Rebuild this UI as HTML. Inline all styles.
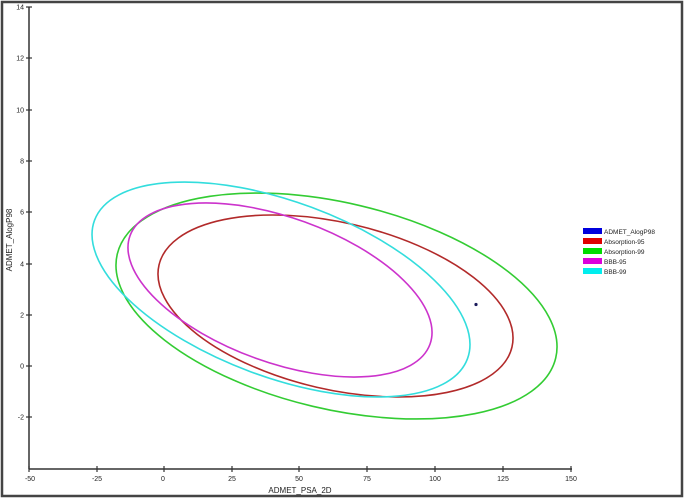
<!DOCTYPE html>
<html><head><style>
html,body{margin:0;padding:0;background:#fff;}
svg{display:block;}
text{font-family:"Liberation Sans",sans-serif;fill:#222;}
</style></head><body>
<svg width="685" height="500" viewBox="0 0 685 500">
<rect x="2" y="2" width="680" height="494" fill="#fff" stroke="#444" stroke-width="2.5"/>
<!-- axes -->
<line x1="29" y1="7" x2="29" y2="469" stroke="#333" stroke-width="1.5"/>
<line x1="29" y1="469" x2="572" y2="469" stroke="#333" stroke-width="1.5"/>
<g stroke="#333" stroke-width="1.2">
<line x1="26" y1="7" x2="32" y2="7"/><line x1="26" y1="58" x2="32" y2="58"/>
<line x1="26" y1="110" x2="32" y2="110"/><line x1="26" y1="161" x2="32" y2="161"/>
<line x1="26" y1="212" x2="32" y2="212"/><line x1="26" y1="264" x2="32" y2="264"/>
<line x1="26" y1="315" x2="32" y2="315"/><line x1="26" y1="366" x2="32" y2="366"/>
<line x1="26" y1="417" x2="32" y2="417"/>
<line x1="29" y1="466" x2="29" y2="472"/><line x1="97" y1="466" x2="97" y2="472"/>
<line x1="164" y1="466" x2="164" y2="472"/><line x1="232" y1="466" x2="232" y2="472"/>
<line x1="299" y1="466" x2="299" y2="472"/><line x1="367" y1="466" x2="367" y2="472"/>
<line x1="435" y1="466" x2="435" y2="472"/><line x1="503" y1="466" x2="503" y2="472"/>
<line x1="571" y1="466" x2="571" y2="472"/>
</g>
<g font-size="7" text-anchor="end">
<text x="24" y="9.5">14</text><text x="24" y="60.5">12</text><text x="24" y="112.5">10</text>
<text x="24" y="163.5">8</text><text x="24" y="214.5">6</text><text x="24" y="266.5">4</text>
<text x="24" y="317.5">2</text><text x="24" y="368.5">0</text><text x="24" y="419.5">-2</text>
</g>
<g font-size="7" text-anchor="middle">
<text x="30" y="481">-50</text><text x="97" y="481">-25</text><text x="163" y="481">0</text>
<text x="232" y="481">25</text><text x="299" y="481">50</text><text x="367" y="481">75</text>
<text x="435" y="481">100</text><text x="503" y="481">125</text><text x="571" y="481">150</text>
</g>
<text x="300" y="493" font-size="8" text-anchor="middle">ADMET_PSA_2D</text>
<text transform="translate(12,240) rotate(-90)" font-size="8" text-anchor="middle">ADMET_AlogP98</text>
<!-- ellipses -->
<g fill="none" stroke-width="1.6">
<ellipse cx="336.5" cy="306" rx="225.3" ry="103.1" transform="rotate(13.33 336.5 306)" stroke="#3c3"/>
<ellipse cx="335.5" cy="306" rx="181.2" ry="83.4" transform="rotate(13.07 335.5 306)" stroke="#b22a2a"/>
<ellipse cx="280" cy="290" rx="159.5" ry="72.4" transform="rotate(19.85 280 290)" stroke="#c3c"/>
<ellipse cx="281" cy="289.5" rx="198.9" ry="87.7" transform="rotate(20.35 281 289.5)" stroke="#3dd"/>
</g>
<circle cx="476" cy="304.5" r="1.6" fill="#1a1a5a"/>
<!-- legend -->
<rect x="583" y="228" width="19" height="6" fill="#0000dd"/>
<rect x="583" y="238" width="19" height="6" fill="#e00000"/>
<rect x="583" y="248" width="19" height="6" fill="#00dd00"/>
<rect x="583" y="258" width="19" height="6" fill="#dd00dd"/>
<rect x="583" y="268" width="19" height="6" fill="#00eeee"/>
<g font-size="6.5">
<text x="604" y="234">ADMET_AlogP98</text>
<text x="604" y="244">Absorption-95</text>
<text x="604" y="254">Absorption-99</text>
<text x="604" y="264">BBB-95</text>
<text x="604" y="274">BBB-99</text>
</g>
</svg>
</body></html>
